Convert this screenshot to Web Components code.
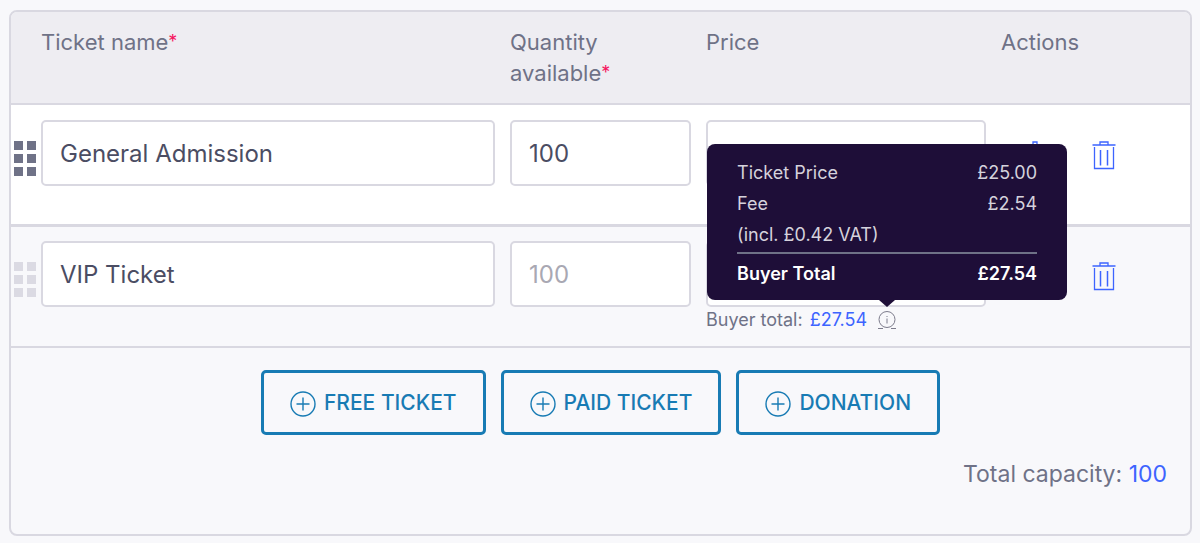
<!DOCTYPE html>
<html lang="en">
<head>
<meta charset="utf-8">
<title>Tickets</title>
<style>
body { margin: 0; background: #f8f8fb; font-family: Inter, "Liberation Sans", sans-serif; }
</style>
</head>
<body>
<ticket-panel></ticket-panel>

<template id="ticket-panel">
  <style>
    :host { display: block; margin: 10px 8px 7px 9px; border: 2px solid #d9d8e1; border-radius: 8px; color: #6f7287; font-size: 22px; line-height: 31px; }
    table { width: 100%; table-layout: fixed; border-collapse: separate; border-spacing: 0; }
    .c-grip { width: 30px; }
    .c-qty { width: 196px; }
    .c-price { width: 295px; }
    .c-act { width: 189px; }
    th { padding: 15px 15px 14px 0; text-align: left; vertical-align: top; font-weight: 400; background: #eeedf2; border-bottom: 2px solid #d9d8e1; }
    th:first-child { border-top-left-radius: 6px; }
    th:last-child { border-top-right-radius: 6px; padding-right: 0; }
    sup { color: #f5155f; font-size: 18px; line-height: 0; vertical-align: 2px; }
    td { height: 105px; padding: 14px 15px 0 0; vertical-align: top; border-bottom: 2px solid #d9d8e1; }
    td:first-child { padding-right: 0; }
    .active td { height: 104px; padding-top: 15px; background: #fff; border-bottom-width: 3px; }
    .actions { display: flex; gap: 45px; padding: 20px 0 0 22px; }
  </style>
  <table>
    <colgroup><col class="c-grip"><col><col class="c-qty"><col class="c-price"><col class="c-act"></colgroup>
    <thead>
      <tr><th></th><th scope="col">Ticket name<sup>*</sup></th><th scope="col">Quantity available<sup>*</sup></th><th scope="col">Price</th><th scope="col">Actions</th></tr>
    </thead>
    <tbody>
      <tr class="active">
        <td><drag-grip style="--grip:#6f7287"></drag-grip></td>
        <td><text-field label="Ticket name" value="General Admission"></text-field></td>
        <td><text-field label="Quantity available" value="100"></text-field></td>
        <td><text-field label="Price"></text-field></td>
        <td><div class="actions"><icon-button icon="gear" label="Settings"></icon-button><icon-button icon="trash" label="Delete"></icon-button></div></td>
      </tr>
      <tr>
        <td><drag-grip></drag-grip></td>
        <td><text-field label="Ticket name" value="VIP Ticket"></text-field></td>
        <td><text-field label="Quantity available" placeholder="100"></text-field></td>
        <td><text-field label="Price"></text-field><buyer-total></buyer-total></td>
        <td><div class="actions"><icon-button icon="gear" label="Settings"></icon-button><icon-button icon="trash" label="Delete"></icon-button></div></td>
      </tr>
    </tbody>
  </table>
  <ticket-footer></ticket-footer>
</template>

<template id="text-field">
  <style>
    :host { display: block; }
    input { display: block; box-sizing: border-box; width: 100%; height: 66px; padding: 0 17px; border: 2px solid #d9d8e1; border-radius: 5px; background: #fff; color: #4b4d63; font: 24px/32px Inter, "Liberation Sans", sans-serif; outline: none; }
    input::placeholder { color: #a9a8b3; opacity: 1; }
  </style>
  <input type="text">
</template>

<template id="drag-grip">
  <style>
    :host { display: grid; grid-template-columns: 9px 9px; grid-auto-rows: 9px; gap: 4px; padding: 21px 0 0 3px; }
    i { background: var(--grip, #dbdae3); }
  </style>
  <i></i><i></i><i></i><i></i><i></i><i></i>
</template>

<template id="icon-button">
  <style>
    :host { display: block; }
    button { display: block; padding: 0; border: 0; background: none; color: #3d64ff; cursor: pointer; }
    svg { display: block; width: 24px; height: 32px; }
  </style>
  <button type="button"></button>
</template>

<template id="buyer-total">
  <style>
    :host { display: flex; align-items: center; height: 25px; font-size: 18px; line-height: 25px; white-space: nowrap; }
    a { margin-left: 7px; color: #3d64ff; text-decoration: none; }
    .info { position: relative; margin-left: 10px; }
    .info svg { display: block; width: 20px; height: 20px; }
    price-tooltip { position: absolute; bottom: 30px; left: 50%; transform: translateX(-50%); }
  </style>
  <span>Buyer total:</span><a href="#total">£27.54</a>
  <span class="info">
    <svg viewBox="0 0 20 20" fill="none" stroke="#7d7c8c"><circle cx="10" cy="9.5" r="8"/><path d="M10 8.5v5M10 6v1M1 18.5h5M14 18.5h5"/></svg>
    <price-tooltip></price-tooltip>
  </span>
</template>

<template id="price-tooltip">
  <style>
    :host { display: block; box-sizing: border-box; width: 360px; padding: 13px 30px 11px; border-radius: 8px; background: #1e0e38; color: #d5d2dc; font-size: 18px; line-height: 31px; }
    :host::after { content: ""; position: absolute; top: 100%; left: 50%; margin-left: -8px; border: 8px solid transparent; border-top: 7px solid #1e0e38; border-bottom: 0; }
    dl { margin: 0; }
    div { display: flex; justify-content: space-between; }
    dd { margin: 0; }
    .total { margin-top: 2px; padding-top: 4px; border-top: 2px solid #6f7287; color: #fff; font-weight: 600; }
  </style>
  <dl>
    <div><dt>Ticket Price</dt><dd>£25.00</dd></div>
    <div><dt>Fee<br>(incl. £0.42 VAT)</dt><dd>£2.54</dd></div>
    <div class="total"><dt>Buyer Total</dt><dd>£27.54</dd></div>
  </dl>
</template>

<template id="ticket-footer">
  <style>
    :host { display: block; padding: 22px 23px 44px; }
    nav { display: flex; justify-content: center; gap: 15px; }
    p { margin: 24px 0 0; font-size: 23px; text-align: right; }
    a { color: #3d64ff; text-decoration: none; }
  </style>
  <nav>
    <add-button>FREE TICKET</add-button>
    <add-button>PAID TICKET</add-button>
    <add-button>DONATION</add-button>
  </nav>
  <p>Total capacity: <a href="#capacity">100</a></p>
</template>

<template id="add-button">
  <style>
    :host { display: block; }
    button { display: flex; align-items: center; gap: 8px; height: 65px; padding: 0 26px; border: 3px solid #187bb4; border-radius: 5px; background: none; color: #187bb4; font: 500 21px/32px Inter, "Liberation Sans", sans-serif; white-space: nowrap; cursor: pointer; }
    svg { width: 26px; height: 26px; margin-top: 3px; }
  </style>
  <button type="button">
    <svg viewBox="0 0 26 26" fill="none" stroke="currentColor" stroke-width="1.4" aria-hidden="true"><circle cx="13" cy="13" r="12"/><path d="M13 6.500v13M6.500 13h13"/></svg>
    <slot></slot>
  </button>
</template>

<script>
const ICONS = {
  trash: '<svg viewBox="0 0 24 32" fill="none" stroke="currentColor" stroke-width="1.3" aria-hidden="true"><path d="M0.500 5h23M8 5V2h8v3M2.500 7v21.500h19V7"/><path d="M8.500 10v15.500M15.500 10v15.500" stroke-width="1.500"/></svg>',
  gear: '<svg viewBox="0 0 24 32" fill="none" stroke="currentColor" stroke-width="1.3" aria-hidden="true"><path d="M10 6V2h4v4l2.500 1 2-2 3 3-2 2 1 2.500h3v4h-3l-1 2.500 2 2-3 3-2-2-2.500 1v3h-4v-3l-2.500-1-2 2-3-3 2-2-1-2.500h-3v-4h3l1-2.500-2-2 3-3 2 2z"/><circle cx="12" cy="14" r="4"/></svg>'
};

class TemplateElement extends HTMLElement {
  constructor() {
    super();
    const tpl = document.getElementById(this.localName);
    this.attachShadow({ mode: 'open' }).append(tpl.content.cloneNode(true));
  }
}

class TextField extends TemplateElement {
  connectedCallback() {
    const input = this.shadowRoot.querySelector('input');
    input.setAttribute('aria-label', this.getAttribute('label'));
    input.value = this.getAttribute('value') || '';
    input.placeholder = this.getAttribute('placeholder') || '';
  }
}

class IconButton extends TemplateElement {
  connectedCallback() {
    const button = this.shadowRoot.querySelector('button');
    button.setAttribute('aria-label', this.getAttribute('label'));
    button.innerHTML = ICONS[this.getAttribute('icon')];
  }
}

customElements.define('text-field', TextField);
customElements.define('icon-button', IconButton);
for (const name of ['drag-grip', 'price-tooltip', 'buyer-total', 'add-button', 'ticket-footer', 'ticket-panel']) {
  customElements.define(name, class extends TemplateElement {});
}
</script>
</body>
</html>
